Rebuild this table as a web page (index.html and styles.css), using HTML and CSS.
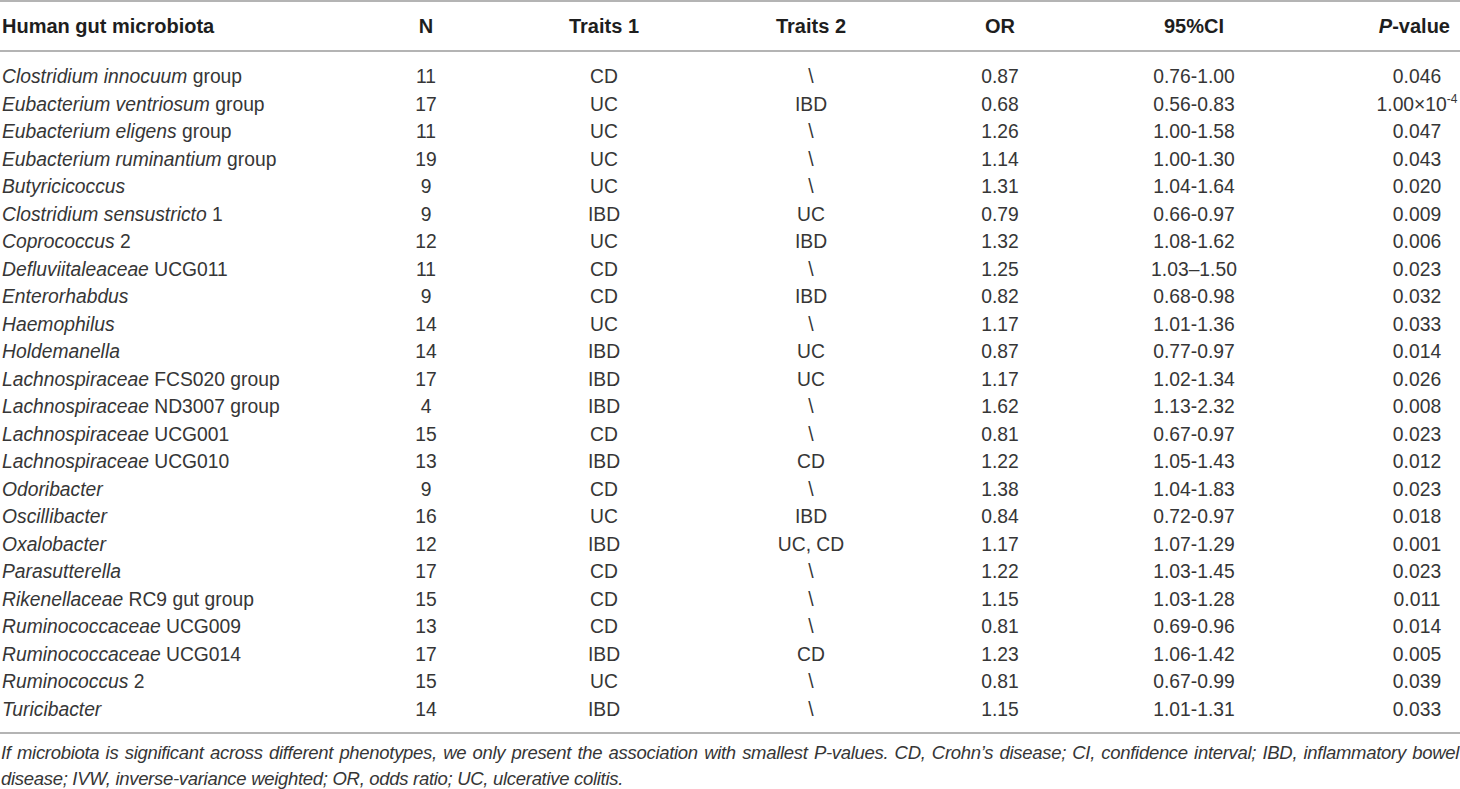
FILE: index.html
```html
<!DOCTYPE html>
<html lang="en">
<head>
<meta charset="utf-8">
<title>Gut microbiota table</title>
<link rel="stylesheet" href="styles.css">
</head>
<body>
<div class="wrap">
<table class="tbl">
  <colgroup>
    <col class="c-name"><col class="c-n"><col class="c-t1"><col class="c-t2"><col class="c-or"><col class="c-ci"><col class="c-p">
  </colgroup>
  <thead>
    <tr>
      <th class="name">Human gut microbiota</th>
      <th>N</th>
      <th>Traits 1</th>
      <th>Traits 2</th>
      <th>OR</th>
      <th>95%CI</th>
      <th class="p"><i>P</i>-value</th>
    </tr>
  </thead>
  <tbody>
    <tr class="first"><td class="name"><i>Clostridium innocuum</i> group</td><td>11</td><td>CD</td><td>\</td><td>0.87</td><td>0.76-1.00</td><td class="p">0.046</td></tr>
    <tr><td class="name"><i>Eubacterium ventriosum</i> group</td><td>17</td><td>UC</td><td>IBD</td><td>0.68</td><td>0.56-0.83</td><td class="p">1.00×10<sup>-4</sup></td></tr>
    <tr><td class="name"><i>Eubacterium eligens</i> group</td><td>11</td><td>UC</td><td>\</td><td>1.26</td><td>1.00-1.58</td><td class="p">0.047</td></tr>
    <tr><td class="name"><i>Eubacterium ruminantium</i> group</td><td>19</td><td>UC</td><td>\</td><td>1.14</td><td>1.00-1.30</td><td class="p">0.043</td></tr>
    <tr><td class="name"><i>Butyricicoccus</i></td><td>9</td><td>UC</td><td>\</td><td>1.31</td><td>1.04-1.64</td><td class="p">0.020</td></tr>
    <tr><td class="name"><i>Clostridium sensustricto</i> 1</td><td>9</td><td>IBD</td><td>UC</td><td>0.79</td><td>0.66-0.97</td><td class="p">0.009</td></tr>
    <tr><td class="name"><i>Coprococcus</i> 2</td><td>12</td><td>UC</td><td>IBD</td><td>1.32</td><td>1.08-1.62</td><td class="p">0.006</td></tr>
    <tr><td class="name"><i>Defluviitaleaceae</i> UCG011</td><td>11</td><td>CD</td><td>\</td><td>1.25</td><td>1.03–1.50</td><td class="p">0.023</td></tr>
    <tr><td class="name"><i>Enterorhabdus</i></td><td>9</td><td>CD</td><td>IBD</td><td>0.82</td><td>0.68-0.98</td><td class="p">0.032</td></tr>
    <tr><td class="name"><i>Haemophilus</i></td><td>14</td><td>UC</td><td>\</td><td>1.17</td><td>1.01-1.36</td><td class="p">0.033</td></tr>
    <tr><td class="name"><i>Holdemanella</i></td><td>14</td><td>IBD</td><td>UC</td><td>0.87</td><td>0.77-0.97</td><td class="p">0.014</td></tr>
    <tr><td class="name"><i>Lachnospiraceae</i> FCS020 group</td><td>17</td><td>IBD</td><td>UC</td><td>1.17</td><td>1.02-1.34</td><td class="p">0.026</td></tr>
    <tr><td class="name"><i>Lachnospiraceae</i> ND3007 group</td><td>4</td><td>IBD</td><td>\</td><td>1.62</td><td>1.13-2.32</td><td class="p">0.008</td></tr>
    <tr><td class="name"><i>Lachnospiraceae</i> UCG001</td><td>15</td><td>CD</td><td>\</td><td>0.81</td><td>0.67-0.97</td><td class="p">0.023</td></tr>
    <tr><td class="name"><i>Lachnospiraceae</i> UCG010</td><td>13</td><td>IBD</td><td>CD</td><td>1.22</td><td>1.05-1.43</td><td class="p">0.012</td></tr>
    <tr><td class="name"><i>Odoribacter</i></td><td>9</td><td>CD</td><td>\</td><td>1.38</td><td>1.04-1.83</td><td class="p">0.023</td></tr>
    <tr><td class="name"><i>Oscillibacter</i></td><td>16</td><td>UC</td><td>IBD</td><td>0.84</td><td>0.72-0.97</td><td class="p">0.018</td></tr>
    <tr><td class="name"><i>Oxalobacter</i></td><td>12</td><td>IBD</td><td>UC, CD</td><td>1.17</td><td>1.07-1.29</td><td class="p">0.001</td></tr>
    <tr><td class="name"><i>Parasutterella</i></td><td>17</td><td>CD</td><td>\</td><td>1.22</td><td>1.03-1.45</td><td class="p">0.023</td></tr>
    <tr><td class="name"><i>Rikenellaceae</i> RC9 gut group</td><td>15</td><td>CD</td><td>\</td><td>1.15</td><td>1.03-1.28</td><td class="p">0.011</td></tr>
    <tr><td class="name"><i>Ruminococcaceae</i> UCG009</td><td>13</td><td>CD</td><td>\</td><td>0.81</td><td>0.69-0.96</td><td class="p">0.014</td></tr>
    <tr><td class="name"><i>Ruminococcaceae</i> UCG014</td><td>17</td><td>IBD</td><td>CD</td><td>1.23</td><td>1.06-1.42</td><td class="p">0.005</td></tr>
    <tr><td class="name"><i>Ruminococcus</i> 2</td><td>15</td><td>UC</td><td>\</td><td>0.81</td><td>0.67-0.99</td><td class="p">0.039</td></tr>
    <tr class="last"><td class="name"><i>Turicibacter</i></td><td>14</td><td>IBD</td><td>\</td><td>1.15</td><td>1.01-1.31</td><td class="p">0.033</td></tr>
  </tbody>
</table>
<p class="note">If microbiota is significant across different phenotypes, we only present the association with smallest P-values. CD, Crohn’s disease; CI, confidence interval; IBD, inflammatory bowel disease; IVW, inverse-variance weighted; OR, odds ratio; UC, ulcerative colitis.</p>
</div>
</body>
</html>
```

FILE: styles.css
```css
html, body {
  margin: 0;
  padding: 0;
  background: #ffffff;
}

.wrap {
  width: 1460px;
  font-family: "Liberation Sans", Arial, sans-serif;
  color: #363636;
}

.tbl {
  width: 1460px;
  border-collapse: collapse;
  table-layout: fixed;
  font-size: 19.3px;
  border-top: 2px solid #b4b4b4;
  border-bottom: 2px solid #b4b4b4;
}

.c-name { width: 352px; }
.c-n { width: 148px; }
.c-t1 { width: 208px; }
.c-t2 { width: 206px; }
.c-or { width: 172px; }
.c-ci { width: 216px; }
.c-p { width: 158px; }

.tbl th {
  font-size: 20px;
  font-weight: bold;
  color: #1e1e1e;
  text-align: center;
  height: 48px;
  padding: 0;
  border-bottom: 2px solid #b4b4b4;
  white-space: nowrap;
}

.tbl td {
  text-align: center;
  padding: 0;
  height: 27.5px;
  line-height: 27.5px;
  white-space: nowrap;
}

.tbl .name {
  text-align: left;
  padding-left: 2px;
}

.tbl th.p {
  text-align: right;
  padding-right: 10px;
}

.tbl td.p {
  padding-left: 72px;
}

.tbl tr.first td {
  padding-top: 11px;
}

.tbl tr.last td {
  padding-bottom: 9px;
}

.tbl sup {
  font-size: 12px;
  line-height: 0;
  vertical-align: 8px;
}

.note {
  margin: 6px 0 0 0;
  padding: 0 1px 0 1px;
  font-size: 18.5px;
  letter-spacing: -0.3px;
  line-height: 26px;
  font-style: italic;
  text-align: justify;
  color: #363636;
}
```
